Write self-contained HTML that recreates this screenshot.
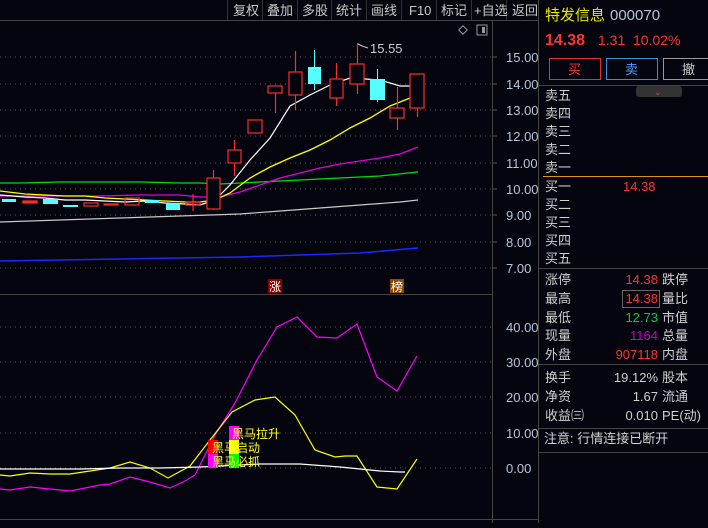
<!DOCTYPE html><html><head><meta charset="utf-8"><style>
body{margin:0;width:708px;height:523px;background:#05050f;overflow:hidden;font-family:"Liberation Sans","Noto Sans CJK SC",sans-serif;}
svg text{font-family:"Liberation Sans","Noto Sans CJK SC",sans-serif;}
</style></head><body>
<svg width="708" height="523" xmlns="http://www.w3.org/2000/svg">
<rect width="708" height="523" fill="#05050f"/>
<line x1="0" y1="20.5" x2="538" y2="20.5" stroke="#444" />
<g stroke="#333"><line x1="227.5" y1="0" x2="227.5" y2="20"/><line x1="262.5" y1="0" x2="262.5" y2="20"/><line x1="297.5" y1="0" x2="297.5" y2="20"/><line x1="331.5" y1="0" x2="331.5" y2="20"/><line x1="366.5" y1="0" x2="366.5" y2="20"/><line x1="401.5" y1="0" x2="401.5" y2="20"/><line x1="436.5" y1="0" x2="436.5" y2="20"/><line x1="471.5" y1="0" x2="471.5" y2="20"/><line x1="506.5" y1="0" x2="506.5" y2="20"/></g>
<g fill="#c8c8c8" font-size="13">
<text x="233" y="15">复权</text><text x="267" y="15">叠加</text><text x="302" y="15">多股</text><text x="336" y="15">统计</text><text x="371" y="15">画线</text><text x="409" y="15">F10</text><text x="441" y="15">标记</text><text x="474" y="15">+自选</text><text x="512" y="15">返回</text>
</g>
<line x1="492.5" y1="21" x2="492.5" y2="523" stroke="#444"/>
<line x1="0" y1="294.5" x2="492" y2="294.5" stroke="#444"/>
<line x1="0" y1="519.5" x2="538" y2="519.5" stroke="#444"/>
<g stroke="#555" stroke-dasharray="1,4">
<line x1="0" y1="57" x2="492" y2="57"/><line x1="0" y1="84" x2="492" y2="84"/><line x1="0" y1="110" x2="492" y2="110"/><line x1="0" y1="136" x2="492" y2="136"/><line x1="0" y1="163" x2="492" y2="163"/><line x1="0" y1="189" x2="492" y2="189"/><line x1="0" y1="215" x2="492" y2="215"/><line x1="0" y1="242" x2="492" y2="242"/><line x1="0" y1="268" x2="492" y2="268"/>
<line x1="0" y1="327" x2="492" y2="327"/><line x1="0" y1="362" x2="492" y2="362"/><line x1="0" y1="397" x2="492" y2="397"/><line x1="0" y1="433" x2="492" y2="433"/><line x1="0" y1="468" x2="492" y2="468"/>
</g>
<g fill="#b8c4d8" font-size="13">
<text x="506" y="62">15.00</text><text x="506" y="89">14.00</text><text x="506" y="115">13.00</text><text x="506" y="141">12.00</text><text x="506" y="168">11.00</text><text x="506" y="194">10.00</text><text x="506" y="220">9.00</text><text x="506" y="247">8.00</text><text x="506" y="273">7.00</text>
<text x="506" y="332">40.00</text><text x="506" y="367">30.00</text><text x="506" y="402">20.00</text><text x="506" y="438">10.00</text><text x="506" y="473">0.00</text>
</g>
<g stroke="#555"><line x1="492" y1="57" x2="497" y2="57"/><line x1="492" y1="84" x2="497" y2="84"/><line x1="492" y1="110" x2="497" y2="110"/><line x1="492" y1="136" x2="497" y2="136"/><line x1="492" y1="163" x2="497" y2="163"/><line x1="492" y1="189" x2="497" y2="189"/><line x1="492" y1="215" x2="497" y2="215"/><line x1="492" y1="242" x2="497" y2="242"/><line x1="492" y1="268" x2="497" y2="268"/></g>
<rect x="460" y="27" width="6" height="6" fill="none" stroke="#999" transform="rotate(45 463 30)"/>
<rect x="477" y="25" width="10" height="10" fill="none" stroke="#999"/><rect x="482" y="27" width="3" height="6" fill="#999"/>
<polyline fill="none" stroke="#00e000" stroke-width="1.3" points="0,183 20,183 60,182 100,182 140,182 180,183 200,183 220,184 260,182 300,180 340,178 380,176 418,172"/>
<polyline fill="none" stroke="#e000e0" stroke-width="1.3" points="0,196 60,196 100,196 140,195 180,195 200,197 220,197 240,192 260,185 280,178 300,173 320,168 340,164 360,161 380,158 400,154 418,147"/>
<polyline fill="none" stroke="#ffff00" stroke-width="1.3" points="0,191 25,194 45,195 65,196 85,196 105,198 125,199 145,200 165,201 185,202 200,202 215,200 230,193 250,178 270,167 290,158 310,150 330,140 350,128 370,118 390,106 410,98 418,95"/>
<polyline fill="none" stroke="#ffffff" stroke-width="1.2" points="0,195 25,197 45,198 65,200 85,200 105,201 125,202 145,201 165,203 185,204 200,205 215,200 230,185 250,160 270,138 290,106 310,95 330,85 350,78 365,79 380,80 400,86 418,86"/>
<polyline fill="none" stroke="#c8c8c8" stroke-width="1.2" points="0,222 60,220 120,218 180,216 240,214 280,211 320,208 360,205 400,202 418,200"/>
<polyline fill="none" stroke="#1a28ff" stroke-width="1.5" points="0,261 60,260 120,259 180,258 240,257 300,255 360,253 418,248"/>
<g stroke="#ff2b2b" fill="none" stroke-width="1.2">
<rect x="23" y="201" width="14" height="2" fill="#ff2b2b"/>
<rect x="84" y="203" width="14" height="3"/><rect x="104" y="204" width="14" height="1"/><rect x="125" y="198" width="14" height="7"/>
<line x1="193" y1="194" x2="193" y2="211"/><rect x="186" y="202" width="14" height="3"/>
<line x1="213.5" y1="170" x2="213.5" y2="210"/><rect x="207" y="178" width="13" height="31" fill="#05050f"/>
<line x1="234.5" y1="140" x2="234.5" y2="176"/><rect x="228" y="150" width="13" height="13" fill="#05050f"/>
<rect x="248" y="120" width="14" height="13"/>
<line x1="275.5" y1="93" x2="275.5" y2="113"/><rect x="268" y="86" width="14" height="7" fill="#05050f"/>
<line x1="295.5" y1="51" x2="295.5" y2="110"/><rect x="289" y="72" width="13" height="23" fill="#05050f"/>
<line x1="336.5" y1="63" x2="336.5" y2="106"/><rect x="330" y="79" width="13" height="19" fill="#05050f"/>
<line x1="357.5" y1="43" x2="357.5" y2="94"/><rect x="350" y="64" width="14" height="20" fill="#05050f"/>
<line x1="397.5" y1="87" x2="397.5" y2="130"/><rect x="390" y="108" width="14" height="10" fill="#05050f"/>
<line x1="417.5" y1="108" x2="417.5" y2="117"/><rect x="410" y="74" width="14" height="34" fill="#05050f"/>
</g>
<g fill="#55ffff">
<rect x="2" y="199" width="14" height="3"/><rect x="43" y="199" width="15" height="5"/><rect x="63" y="205" width="15" height="2"/><rect x="145" y="200" width="14" height="3"/><rect x="166" y="203" width="14" height="7"/>
<rect x="314" y="50" width="1" height="40"/><rect x="308" y="67" width="13" height="17"/>
<rect x="377" y="69" width="1" height="33"/><rect x="370" y="79" width="15" height="21"/>
</g>
<polyline points="358,44 362,46 368,48" fill="none" stroke="#ccc"/>
<text x="370" y="53" fill="#ccc" font-size="13">15.55</text>
<rect x="268" y="279" width="14" height="14" fill="#8b0000"/><text x="269" y="291" fill="#fff" font-size="12">涨</text>
<rect x="390" y="279" width="14" height="14" fill="#8b4a00"/><text x="391" y="291" fill="#fff" font-size="12">榜</text>
<polyline fill="none" stroke="#ff00ff" stroke-width="1.2" points="0,489 10,490 30,487 50,489 70,491 80,489 100,485 110,484 130,477 150,482 170,488 185,481 195,475 215,435 235,403 257,360 277,327 297,317 317,337 337,338 357,324 377,377 397,391 417,356"/>
<polyline fill="none" stroke="#ffff00" stroke-width="1.2" points="0,475 10,476 30,473 50,474 70,474 90,471 110,468 130,462 150,468 168,478 190,466 210,440 232,412 255,400 275,397 295,415 315,450 335,457 345,456 357,456 377,487 397,489 417,459"/>
<polyline fill="none" stroke="#ffffff" stroke-width="1.2" points="0,469 80,469 120,468 160,468 200,467 260,464 300,464 340,467 360,469 380,471 400,472 405,472"/>
<rect x="208" y="440" width="10" height="14" fill="#ff0000"/><rect x="208" y="454" width="10" height="14" fill="#ff00ff"/>
<rect x="229" y="426" width="10" height="14" fill="#ff00ff"/><rect x="229" y="440" width="10" height="14" fill="#ffff00"/><rect x="229" y="454" width="10" height="14" fill="#00ff00"/>
<g fill="#ffff33" font-size="12"><text x="232" y="438">黑马拉升</text><text x="212" y="452">黑马启动</text><text x="212" y="466">黑马必抓</text></g>
<line x1="538.5" y1="0" x2="538.5" y2="523" stroke="#444"/>
<text x="545" y="20" fill="#e8e800" font-size="15">特发信息</text><text x="610" y="20" fill="#b8c4d8" font-size="15">000070</text>
<text x="545" y="45" fill="#ff3333" font-size="16" font-weight="bold">14.38</text>
<text x="598" y="45" fill="#ff3333" font-size="14">1.31</text><text x="633" y="45" fill="#ff3333" font-size="14">10.02%</text>
<rect x="549.5" y="58.5" width="51" height="21" fill="none" stroke="#e03030"/><text x="568" y="74" fill="#ff3333" font-size="13">买</text>
<rect x="606.5" y="58.5" width="51" height="21" fill="none" stroke="#3a8ee0"/><text x="625" y="74" fill="#4aa0ff" font-size="13">卖</text>
<rect x="663.5" y="58.5" width="50" height="21" fill="none" stroke="#999"/><text x="682" y="74" fill="#ccc" font-size="13">撤</text>
<line x1="538" y1="85.5" x2="708" y2="85.5" stroke="#444"/>
<rect x="636" y="86" width="46" height="11" rx="3" fill="#333"/><text x="654" y="95" fill="#ff3333" font-size="9">⌄</text>
<g fill="#d0d0d0" font-size="13">
<text x="545" y="100">卖五</text><text x="545" y="118">卖四</text><text x="545" y="136">卖三</text><text x="545" y="154">卖二</text><text x="545" y="172">卖一</text>
<text x="545" y="191">买一</text><text x="545" y="209">买二</text><text x="545" y="227">买三</text><text x="545" y="245">买四</text><text x="545" y="263">买五</text>
</g>
<line x1="543" y1="176.5" x2="708" y2="176.5" stroke="#e0901a"/>
<text x="623" y="191" fill="#ff3333" font-size="13">14.38</text>
<line x1="538" y1="268.5" x2="708" y2="268.5" stroke="#444"/>
<g fill="#d0d0d0" font-size="13">
<text x="545" y="284">涨停</text><text x="545" y="303">最高</text><text x="545" y="322">最低</text><text x="545" y="340">现量</text><text x="545" y="359">外盘</text>
<text x="662" y="284">跌停</text><text x="662" y="303">量比</text><text x="662" y="322">市值</text><text x="662" y="340">总量</text><text x="662" y="359">内盘</text>
<text x="545" y="382">换手</text><text x="545" y="401">净资</text><text x="545" y="420">收益㈢</text>
<text x="662" y="382">股本</text><text x="662" y="401">流通</text><text x="662" y="420">PE(动)</text>
<text x="544" y="443">注意: 行情连接已断开</text>
</g>
<g font-size="13" text-anchor="end">
<text x="658" y="284" fill="#ff3333">14.38</text>
<rect x="622.5" y="290.5" width="37" height="17" fill="none" stroke="#666"/>
<text x="658" y="303" fill="#ff3333">14.38</text>
<text x="658" y="322" fill="#00cc44">12.73</text>
<text x="658" y="340" fill="#cc00cc">1164</text>
<text x="658" y="359" fill="#ff3333">907118</text>
<text x="658" y="382" fill="#d0d0d0">19.12%</text>
<text x="658" y="401" fill="#d0d0d0">1.67</text>
<text x="658" y="420" fill="#d0d0d0">0.010</text>
</g>
<line x1="538" y1="364.5" x2="708" y2="364.5" stroke="#444"/>
<line x1="538" y1="428.5" x2="708" y2="428.5" stroke="#444"/>
<line x1="538" y1="452.5" x2="708" y2="452.5" stroke="#444"/>
</svg>
</body></html>
